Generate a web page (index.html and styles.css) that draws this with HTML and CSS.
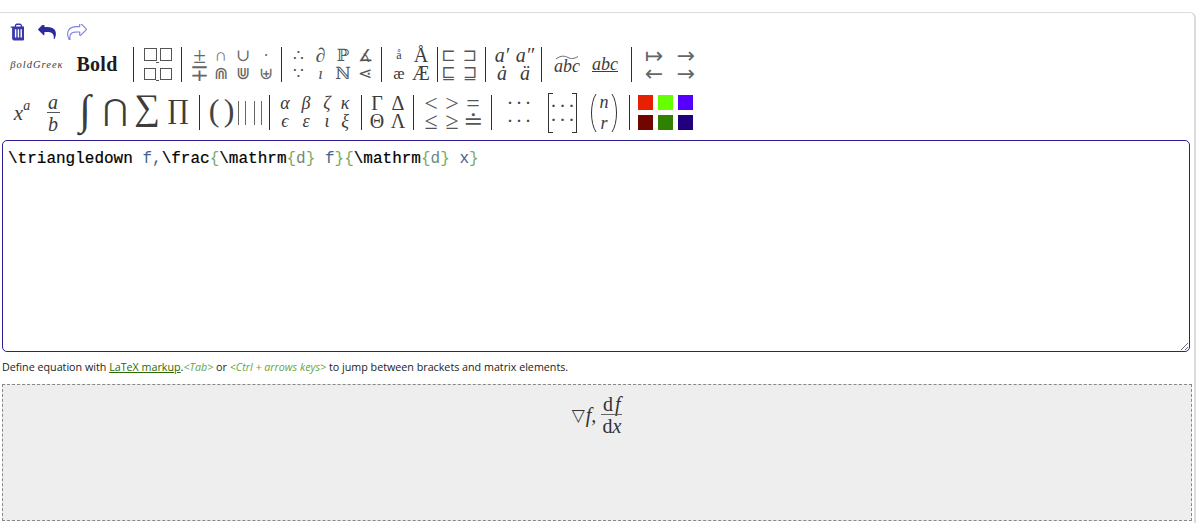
FILE: index.html
```html
<!DOCTYPE html>
<html lang="en">
<head>
<meta charset="utf-8">
<title>Equation editor</title>
<link rel="stylesheet" href="styles.css">
</head>
<body>
<main class="panel">
  <div class="actions">
    <svg class="ic-trash" viewBox="128 128 1280 1536"><path d="M704 1376v-704q0-14-9-23t-23-9h-64q-14 0-23 9t-9 23v704q0 14 9 23t23 9h64q14 0 23-9t9-23zm256 0v-704q0-14-9-23t-23-9h-64q-14 0-23 9t-9 23v704q0 14 9 23t23 9h64q14 0 23-9t9-23zm256 0v-704q0-14-9-23t-23-9h-64q-14 0-23 9t-9 23v704q0 14 9 23t23 9h64q14 0 23-9t9-23zm-544-992h448l-48-117q-7-9-17-11h-317q-10 2-17 11zm928 32v64q0 14-9 23t-23 9h-96v948q0 83-47 143.5t-113 60.5h-832q-66 0-113-58.5t-47-141.5v-952h-96q-14 0-23-9t-9-23v-64q0-14 9-23t23-9h309l70-167q15-37 54-63t79-26h320q40 0 79 26t54 63l70 167h309q14 0 23 9t9 23z"/></svg>
    <svg class="ic-undo" viewBox="0 192 1792 1408"><path d="M1792 1120q0 166-127 451-3 7-10.5 24t-13.5 30-13 22q-12 17-28 17-15 0-23.5-10t-8.5-25q0-9 2.5-26.5t2.5-23.5q5-68 5-123 0-101-17.5-181t-48.5-138.5-80-101-105.5-69.5-133-42.5-154-21.5-175.5-6h-224v256q0 26-19 45t-45 19-45-19l-512-512q-19-19-19-45t19-45l512-512q19-19 45-19t45 19 19 45v256h224q713 0 875 403 53 134 53 333z"/></svg>
    <svg class="ic-redo" viewBox="-60 130 1912 1530"><g transform="matrix(-1 0 0 1 1792 0)"><path d="M1792 1120q0 166-127 451-3 7-10.5 24t-13.5 30-13 22q-12 17-28 17-15 0-23.5-10t-8.5-25q0-9 2.5-26.5t2.5-23.5q5-68 5-123 0-101-17.5-181t-48.5-138.5-80-101-105.5-69.5-133-42.5-154-21.5-175.5-6h-224v256q0 26-19 45t-45 19-45-19l-512-512q-19-19-19-45t19-45l512-512q19-19 45-19t45 19 19 45v256h224q713 0 875 403 53 134 53 333z"/></g></svg>
  </div>

  <div class="row row-one">
    <div class="g r1a">
      <span class="tall boldgreek">βoldGreeκ</span>
      <span class="tall bold">Bold</span>
    </div>
    <div class="g r1b">
      <svg class="tall boxes" viewBox="0 0 29 33">
        <rect x="0.5" y="0.5" width="12" height="12"/><rect x="16.5" y="0.5" width="11" height="12"/>
        <rect x="0.5" y="20.5" width="11" height="11"/><rect x="16.5" y="20.5" width="11" height="11"/>
        <path d="M12 14.500h3M12 32.500h3"/>
      </svg>
    </div>
    <div class="g r1c">
      <span class="pm">±</span><span>∩</span><span>∪</span><span>·</span>
      <span class="pm">∓</span><span>⋒</span><span>⋓</span><span>⊎</span>
    </div>
    <div class="g r1d">
      <span>∴</span><span class="i lg">∂</span><span>ℙ</span><span>∡</span>
      <span>∵</span><span class="i">ı</span><span>ℕ</span><span>⋖</span>
    </div>
    <div class="g r1e">
      <span class="sm">å</span><span class="lg">Å</span>
      <span>æ</span><span class="lg">Æ</span>
    </div>
    <div class="g r1f">
      <span>⊏</span><span>⊐</span>
      <span>⊑</span><span>⊒</span>
    </div>
    <div class="g r1g">
      <span class="i">a′</span><span class="i">a″</span>
      <span class="i">ȧ</span><span class="i">ä</span>
    </div>
    <div class="g r1h">
      <span class="tall tilde">
        <svg viewBox="0 0 24 5"><path d="M1 4C6 0 10 1 13 2.500S19 4 23 1.500"/></svg>
        <span class="i">abc</span>
      </span>
      <span class="tall under i">abc</span>
    </div>
    <div class="g r1i">
      <span>↦</span><span>→</span>
      <span>←</span><span>→</span>
    </div>
  </div>

  <div class="row row-two">
    <div class="g r2a">
      <span class="tall power i"><span>x</span><sup>a</sup></span>
      <span class="tall frac i"><span>a</span><span class="bar">b</span></span>
      <span class="tall integral i">∫</span>
      <span class="tall big cap">⋂</span>
      <span class="tall big">∑</span>
      <span class="tall big prod">∏</span>
    </div>
    <div class="g r2b">
      <span class="tall paren">(</span>
      <span class="tall paren">)</span>
      <span class="tall dbl"></span>
      <span class="tall dbl"></span>
    </div>
    <div class="g r2c">
      <span class="i">α</span><span class="i">β</span><span class="i">ζ</span><span class="i">κ</span>
      <span class="i">ϵ</span><span class="i">ε</span><span class="i">ι</span><span class="i">ξ</span>
    </div>
    <div class="g r2d">
      <span class="lg">Γ</span><span class="lg">Δ</span>
      <span class="lg">Θ</span><span class="lg">Λ</span>
    </div>
    <div class="g r2e">
      <span class="rel">&lt;</span><span class="rel">&gt;</span><span class="rel">=</span>
      <span class="rel">≤</span><span class="rel">≥</span><span class="rel">≐</span>
    </div>
    <div class="g r2f">
      <span class="dots col-a">···</span>
      <span class="tall matrix col-b"><span class="dots">···</span><span class="dots">···</span></span>
      <span class="tall binom col-c">
        <svg viewBox="0 0 8 40"><path d="M7 1C1 10 1 30 7 39"/></svg>
        <span class="stack i"><span>n</span><span>r</span></span>
        <svg viewBox="0 0 8 40"><path d="M1 1C7 10 7 30 1 39"/></svg>
      </span>
      <span class="dots col-a">···</span>
    </div>
    <div class="swatches">
      <span class="sw c1"></span><span class="sw c2"></span><span class="sw c3"></span>
      <span class="sw c4"></span><span class="sw c5"></span><span class="sw c6"></span>
    </div>
  </div>

  <div class="editor"><b>\triangledown</b> <span class="v">f,</span><b>\frac</b><span class="br">{</span><b>\mathrm</b><span class="br">{</span><span class="d">d</span><span class="br">}</span> <span class="v">f</span><span class="br">}{</span><b>\mathrm</b><span class="br">{</span><span class="d">d</span><span class="br">}</span> <span class="v">x</span><span class="br">}</span></div>

  <p class="hint">Define equation with <a href="#">LaTeX markup</a>.<em>&lt;Tab&gt;</em> or <em>&lt;Ctrl + arrows keys&gt;</em> to jump between brackets and matrix elements.</p>

  <div class="preview">
    <div class="formula">
      <span class="nabla">▽</span><span class="i fn">f,</span>
      <span class="pfrac"><span>d <span class="i">f</span></span><span class="pbar">d<span class="i">x</span></span></span>
    </div>
  </div>
</main>
</body>
</html>
```
FILE: styles.css
```css
* { box-sizing: border-box; }
html, body { margin: 0; padding: 0; background: #fff; }
body { height: 523px; overflow: hidden; }

.panel {
  width: 1196px;
  margin-top: 12px;
  padding-top: 10px;
  border-top: 1px solid #dcdcdc;
  border-right: 2px solid #dcdcdc;
  border-top-right-radius: 6px;
  height: 511px;
  overflow: hidden;
}

.actions {
  display: flex;
  align-items: center;
  height: 18px;
  padding-left: 10px;
  margin-bottom: 6px;
}
.ic-trash { width: 14px; height: 18px; fill: #3a38ad; }
.ic-undo { width: 18px; height: 14px; margin-left: 14px; margin-top: -1px; fill: #2c2a9e; }
.ic-redo { width: 20px; height: 16px; margin-left: 11px; margin-top: -1px; fill: none; stroke: #7d82dc; stroke-width: 110; }

.row { display: flex; height: 35px; color: #3c3c3c; font-family: "Liberation Serif", "DejaVu Serif", serif; font-size: 17px; }
.row-two { margin-top: 13px; }

.g {
  display: grid;
  grid-template-rows: 17.5px 17.5px;
  border-right: 1px solid #2b1f8f;
  flex: none;
}
.g > span, .g > svg { display: flex; align-items: center; justify-content: center; line-height: 17.5px; white-space: nowrap; }
.tall { grid-row: 1 / span 2; }
.col-a { grid-column: 1; }
.col-b { grid-column: 2; }
.col-c { grid-column: 3; }
.i { font-style: italic; }
.sm { font-size: 12px; }
.lg { font-size: 20px; }
.pm { font-size: 23px; }
.rel { font-size: 24px; font-weight: 400; color: #555; }

.r1a { width: 134px; grid-template-columns: 74px 46px; }
.r1b { width: 48px; padding-left: 10px; grid-template-columns: 29px; }
.r1c { width: 100px; padding-left: 7px; grid-template-columns: 21px 22px 22px 24px; color: #666; }
.r1d { width: 100px; padding-left: 5px; grid-template-columns: 22px 23px 22px 22px; color: #555; }
.r1e { width: 56px; padding-left: 6px; grid-template-columns: 22px 22px; }
.r1f { width: 48px; grid-template-columns: 21px 22px; color: #555; }
.r1g { width: 56px; padding-left: 5px; grid-template-columns: 22px 24px; font-size: 20px; }
.r1h { width: 90px; grid-template-columns: 50px 26px; font-size: 18px; }
.r1i { width: 64px; border-right: 0; grid-template-columns: 44px 20px; font-family: "DejaVu Sans", sans-serif; font-size: 22px; font-weight: 400; color: #666; }

.r2a { width: 200px; padding-left: 6px; grid-template-columns: 32px 30px 34px 26px 38px 24px; }
.r2b { width: 70px; padding-left: 7px; grid-template-columns: 14px 16px 10px 22px; }
.r2c { width: 92px; padding-left: 5px; grid-template-columns: 20px 22px 20px 16px; font-size: 18px; }
.r2d { width: 52px; padding-left: 4px; grid-template-columns: 22px 20px; }
.r2e { width: 78px; padding-left: 6px; grid-template-columns: 22px 20px 22px; }
.r2f { width: 138px; grid-template-columns: 54px 33px 50px; }

.boldgreek { font-style: italic; font-size: 10.500px; letter-spacing: 1px; }
.bold { font-weight: 700; font-size: 20px; letter-spacing: 0.3px; color: #1c1c1c; }

.boxes { width: 29px; height: 33px; align-self: center; fill: none; stroke: #555; stroke-width: 1; }

.tilde { flex-direction: column; padding-top: 2px; }
.tilde svg { width: 24px; height: 5px; margin-bottom: -2px; fill: none; stroke: #444; stroke-width: 0.8; }
.under { text-decoration: underline; text-decoration-thickness: 1px; }

.power { font-size: 21px; padding-top: 3px; }
.power sup { font-size: 14px; line-height: 14px; margin-bottom: 16px; }
.frac { flex-direction: column; font-size: 20px; }
.frac > span { line-height: 18px; }
.frac .bar { border-top: 1px solid #555; width: 13px; text-align: center; margin-top: 1px; padding-top: 2px; }
.integral { font-size: 42px; padding-bottom: 4px; }
.big { font-size: 36px; padding-bottom: 9px; }
.cap { font-size: 30px; padding-bottom: 5px; }
.prod { font-family: "DejaVu Serif", serif; font-size: 26px; padding-bottom: 4px; }
.paren { font-size: 32px; font-weight: 400; color: #444; padding-bottom: 4px; }
.dbl::before {
  content: "";
  width: 6px;
  height: 24px;
  border-left: 1px solid #666;
  border-right: 1px solid #666;
}

.dots { font-family: "Liberation Serif", serif; font-size: 15px; letter-spacing: 4px; padding-left: 4px; font-weight: 700; color: #444; }
.matrix {
  flex-direction: column;
  justify-content: space-around;
  width: 29px;
  height: 40px;
  margin: -2.500px 2px;
  border: 1px solid #333;
  position: relative;
}
.matrix::before {
  content: "";
  position: absolute;
  left: 4px;
  right: 4px;
  top: -1px;
  bottom: -1px;
  background: #fff;
}
.matrix > span { position: relative; line-height: 14px; }
.binom { gap: 2px; margin: -2.500px 0; }
.binom svg { width: 8px; height: 40px; fill: none; stroke: #333; stroke-width: 1; }
.stack { display: flex; flex-direction: column; gap: 3px; align-items: center; font-size: 18px; line-height: 18px; width: 10px; }

.swatches {
  display: grid;
  grid-template-columns: repeat(3, 15px);
  grid-template-rows: 15px 15px;
  gap: 5px;
  margin-left: 8px;
}
.sw { display: block; }
.c1 { background: #e62000; }
.c2 { background: #66ff00; }
.c3 { background: #5500ff; }
.c4 { background: #730500; }
.c5 { background: #2f8200; }
.c6 { background: #21007f; }

.editor {
  width: 1188px;
  height: 212px;
  margin: 10px 0 0 2px;
  padding: 9px 5px;
  border: 1px solid #2b1f8f;
  border-radius: 5px;
  font-family: "Liberation Mono", "Courier New", monospace;
  font-size: 16px;
  line-height: 19px;
  color: #3f5f8f;
  white-space: pre;
  resize: both;
  overflow: auto;
}
.editor b { font-weight: 400; color: #000; -webkit-text-stroke: 0.2px #000; }
.v { color: #42638f; }
.br { color: #7aab64; }
.d { color: #6b8a80; }

.hint {
  margin: 8px 0 0 2px;
  height: 14px;
  font-family: "Open Sans", sans-serif;
  font-size: 10.730px;
  line-height: 14px;
  color: #222;
  white-space: nowrap;
}
.hint a { color: #2b6a00; text-decoration: underline; }
.hint em { color: #6aa544; }

.preview {
  width: 1190px;
  height: 137px;
  margin: 10px 0 0 2px;
  border: 1px dashed #888;
  background: #eee;
  display: flex;
  justify-content: center;
  padding-top: 8px;
}
.formula {
  display: flex;
  align-items: center;
  height: 44px;
  font-family: "Liberation Serif", serif;
  font-size: 20px;
  color: #333;
}
.nabla { font-size: 17px; margin-right: 1px; font-family: "DejaVu Sans", sans-serif; }
.fn { margin-right: 5px; }
.pfrac { display: flex; flex-direction: column; align-items: center; line-height: 20px; }
.pfrac > span:first-child { word-spacing: -3px; }
.pbar { border-top: 1px solid #666; padding: 1px 1px 0; }
```
